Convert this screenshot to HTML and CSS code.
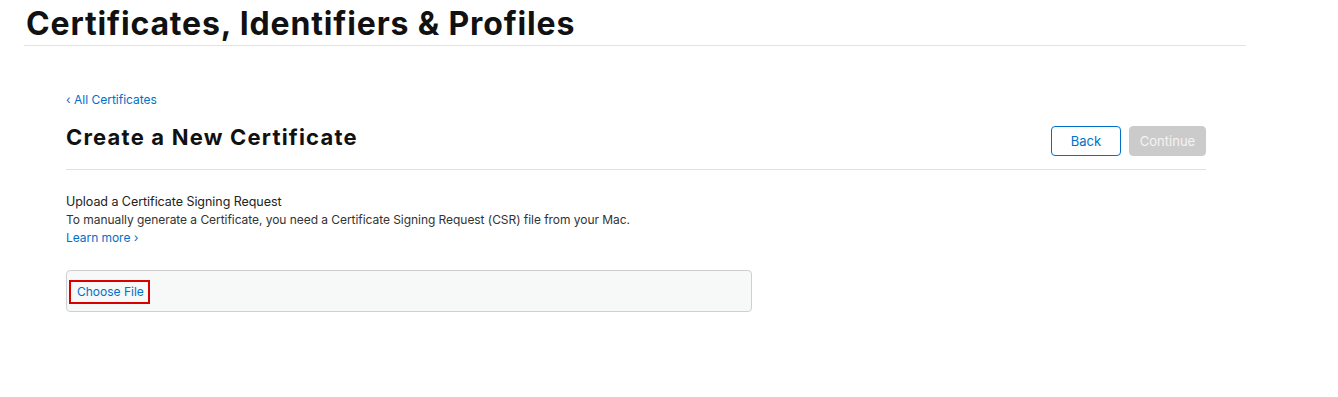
FILE: index.html
```html
<!DOCTYPE html>
<html lang="en">
<head>
    <meta charset="UTF-8">
    <meta name="viewport" content="width=device-width, initial-scale=1.0">
    <title>Certificates, Identifiers &amp; Profiles</title>
    <link rel="stylesheet" href="styles.css">
</head>
<body>
    <header class="page-header">
        <h1>Certificates, Identifiers &amp; Profiles</h1>
    </header>

    <div class="main">
        <a class="back-link" href="#">&lsaquo; All Certificates</a>
        <div class="title-bar">
            <h2>Create a New Certificate</h2>
            <div class="actions">
                <button class="btn btn-outline">Back</button>
                <button class="btn btn-disabled" disabled>Continue</button>
            </div>
        </div>

        <div class="section">
            <p class="section-title">Upload a Certificate Signing Request</p>
            <p class="section-text">To manually generate a Certificate, you need a Certificate Signing Request (CSR) file from your Mac.</p>
            <a class="more-link" href="#">Learn more &rsaquo;</a>
        </div>

        <div class="upload-box">
            <span class="choose-file">Choose File</span>
        </div>
    </div>
</body>
</html>
```

FILE: styles.css
```css
body {
    margin: 0;
    font-family: Inter, "Liberation Sans", sans-serif;
    color: #1d1d1f;
    background: #fff;
}
.page-header {
    width: 1222px;
    margin-left: 24px;
    border-bottom: 1px solid #e3e3e3;
    height: 45px;
}
.page-header h1 {
    margin: 0 0 0 2px;
    padding-top: 6px;
    font-size: 32px;
    font-weight: 700;
    line-height: 36px;
    color: #111;
    letter-spacing: 0.85px;
}
.main {
    width: 1140px;
    margin-left: 66px;
    padding-top: 46px;
}
.back-link {
    display: block;
    font-size: 12px;
    line-height: 16px;
    color: #0070c9;
    text-decoration: none;
}
.title-bar {
    display: flex;
    justify-content: space-between;
    align-items: flex-start;
    border-bottom: 1px solid #e0e0e0;
    padding-top: 15px;
    height: 62px;
    box-sizing: border-box;
}
.title-bar h2 {
    margin: 0;
    font-size: 22px;
    line-height: 28px;
    font-weight: 700;
    color: #111;
    letter-spacing: 1.2px;
}
.actions {
    display: flex;
    gap: 8px;
    padding-top: 3px;
}
.btn {
    height: 30px;
    font-family: inherit;
    font-size: 13px;
    border-radius: 4px;
    padding: 0;
}
.btn-outline {
    width: 70px;
    background: #fff;
    border: 1px solid #0070c9;
    color: #0070c9;
}
.btn-disabled {
    width: 77px;
    background: #cbcbcb;
    border: 1px solid #cbcbcb;
    color: #f4f4f4;
}
.section {
    padding-top: 23px;
    font-size: 12px;
    line-height: 18px;
    letter-spacing: -0.05px;
}
.section p {
    margin: 0;
}
.section-title {
    font-size: 12.5px;
    color: #222;
}
.section-text {
    color: #333;
}
.more-link {
    color: #0070c9;
    text-decoration: none;
}
.upload-box {
    margin-top: 23px;
    width: 686px;
    height: 42px;
    box-sizing: border-box;
    background: #f7f8f8;
    border: 1px solid #cfcfcf;
    border-radius: 4px;
    padding: 9px 0 0 2px;
}
.choose-file {
    display: inline-block;
    box-sizing: border-box;
    width: 81px;
    height: 24px;
    border: 2px solid #d90000;
    padding: 0 0 0 6px;
    line-height: 20px;
    font-size: 12px;
    color: #0070c9;
    white-space: nowrap;
}
```
